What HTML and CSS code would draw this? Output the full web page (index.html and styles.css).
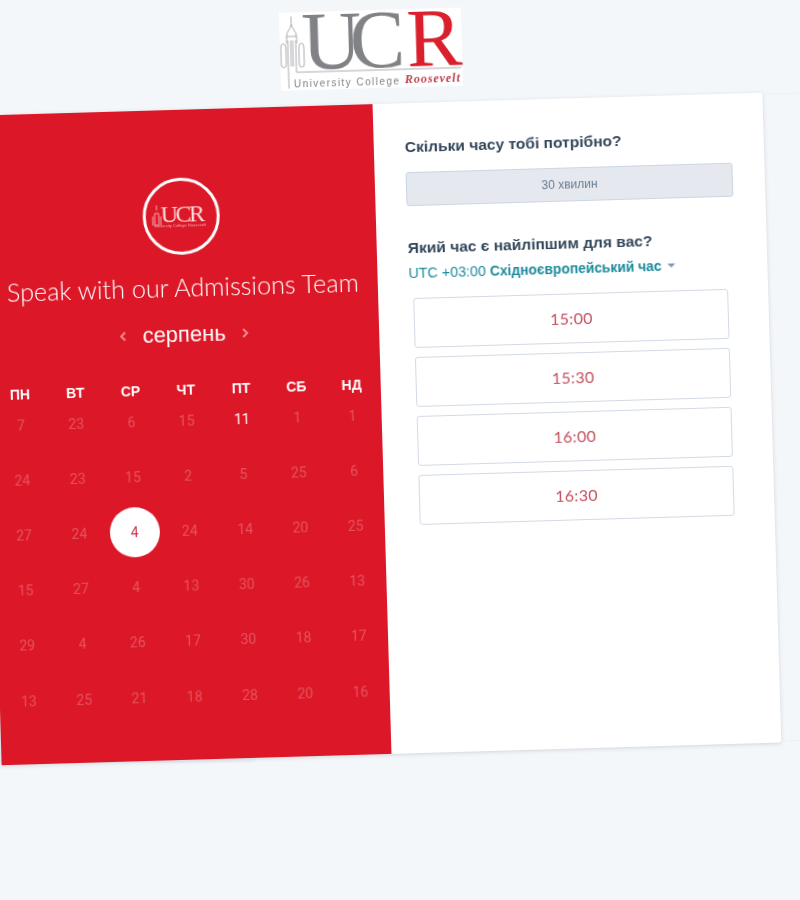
FILE: index.html
```html
<!doctype html>
<html>
<head>
	<title>Speak with our Admissions Team</title>
	<meta charset="utf-8">
	<link rel="stylesheet" href="styles.css">
</head>
<body>
	<div class="page">
		<div class="logo">
			<svg class="logoArt" width="182" height="78" viewBox="0 0 182 78">
				<path class="tower" d="M12 4V12M12 12C11 17 7 19 7 24M12 12C13 17 17 19 17 24M7 24H17M7 24V31M17 24V31M1 35Q1 31 3.5 31Q6 31 6 35V52Q6 55 3.5 55Q1 55 1 52ZM19 35Q19 31 21.5 31Q24 31 24 35V52Q24 55 21.5 55Q19 55 19 52ZM8 28V54M11 28V54M13 28V54M16 28V54M8 54V76M16 54V60H181"/>
				<text class="logoU" x="22" y="57">UC</text>
				<text class="logoR" x="127" y="57">R</text>
				<text class="logoLine" x="13" y="75" textLength="105">University College</text>
				<text class="logoScript" x="124" y="74" textLength="55">Roosevelt</text>
			</svg>
		</div>

		<div class="card">
			<div class="side">
				<div class="ring">
					<svg class="ringArt" width="62" height="26" viewBox="0 0 62 26">
						<path class="ringTower" d="M7 1V6M5 21V9H9V21ZM3 21V12M11 21V12"/>
						<text class="ringUcr" x="11" y="18">UCR</text>
						<text class="ringSub" x="4" y="23" textLength="52">University College Roosevelt</text>
					</svg>
				</div>
				<h2>Speak with our Admissions Team</h2>
				<div class="month">
					<svg class="arrow" width="8" height="12" viewBox="0 0 8 12"><path d="M6 2L2 6L6 10"/></svg>
					<span>серпень</span>
					<svg class="arrow" width="8" height="12" viewBox="0 0 8 12"><path d="M2 2L6 6L2 10"/></svg>
				</div>
				<div class="days">
					<b>ПН</b><b>ВТ</b><b>СР</b><b>ЧТ</b><b>ПТ</b><b>СБ</b><b>НД</b>
				</div>
				<div class="dates">
					<i>7</i><i>23</i><i>6</i><i>15</i><i class="on">11</i><i>1</i><i>1</i>
					<i>24</i><i>23</i><i>15</i><i>2</i><i>5</i><i>25</i><i>6</i>
					<i>27</i><i>24</i><i class="picked"><span>4</span></i><i>24</i><i>14</i><i>20</i><i>25</i>
					<i>15</i><i>27</i><i>4</i><i>13</i><i>30</i><i>26</i><i>13</i>
					<i>29</i><i>4</i><i>26</i><i>17</i><i>30</i><i>18</i><i>17</i>
					<i>13</i><i>25</i><i>21</i><i>18</i><i>28</i><i>20</i><i>16</i>
				</div>
			</div>

			<div class="main">
				<h3>Скільки часу тобі потрібно?</h3>
				<div class="duration">30 хвилин</div>
				<h3 class="second">Який час є найліпшим для вас?</h3>
				<div class="zone">UTC +03:00 <b>Східноєвропейський час</b><span class="caret"></span></div>
				<div class="slots">
					<a href="#">15:00</a>
					<a href="#">15:30</a>
					<a href="#">16:00</a>
					<a href="#">16:30</a>
				</div>
			</div>
		</div>
	</div>
</body>
</html>
```

FILE: styles.css
```css
html, body { margin: 0; padding: 0; height: 100% }
body {
	background-color: #f4f7fa;
	overflow: hidden;
	font-family: "Liberation Sans", Arial, sans-serif;
}

/* the whole page is photographed slightly turned */
.page {
	width: 780px;
	margin: 10px 0 0 -8px;
	transform: rotate(-1.67deg);
	transform-origin: 390px 419px;
	filter: blur(.3px);
}

.logo {
	display: flex;
	justify-content: center;
	margin-bottom: 16px;
}
.logoArt { background-color: #fff; filter: blur(.4px); display: block; overflow: visible }
.tower { fill: none; stroke: #9a9a9e; stroke-width: .8 }
.logoU { font-family: "Liberation Serif", serif; font-size: 83px; fill: #808285; letter-spacing: -12px }
.logoR { font-family: "Liberation Serif", serif; font-size: 83px; fill: #d9202c }
.logoLine { font-family: "Liberation Sans", sans-serif; font-size: 10px; fill: #808285 }
.logoScript { font-family: "Liberation Serif", serif; font-style: italic; font-weight: bold; font-size: 12px; fill: #b9404a }

.card {
	position: relative;
	display: flex;
	height: 650px;
	background-color: #fff;
	border-radius: 3px;
	box-shadow: 0 1px 4px rgba(60, 70, 90, .2);
}
/* faint edge of the section behind the card */
.card:after {
	content: "";
	position: absolute;
	left: 100%;
	top: 1px;
	bottom: 1px;
	width: 60px;
	border-top: 1px solid #edf0f4;
	border-bottom: 1px solid #edf0f4;
}

.side {
	width: 390px;
	flex: none;
	background-color: #dc1727;
	color: #fff;
	text-align: center;
	padding-top: 68px;
	box-sizing: border-box;
}
.ring {
	width: 71px;
	height: 71px;
	margin: 0 auto;
	border: 3px solid #fff;
	border-radius: 50%;
	display: flex;
	align-items: center;
	justify-content: center;
}
.ringArt { overflow: visible }
.ringTower { fill: none; stroke: #f5a8ae; stroke-width: 1 }
.ringUcr { font-family: "Liberation Serif", serif; font-size: 24px; fill: #fbdcdf; letter-spacing: -2.5px }
.ringSub { font-family: "Liberation Sans", sans-serif; font-size: 4px; fill: #f5a8ae }

h2 {
	margin: 14px 0 0;
	font-family: Lato, sans-serif;
	font-weight: 300;
	font-size: 25.2px;
	line-height: 36px;
}
.month {
	display: flex;
	align-items: center;
	justify-content: center;
	gap: 15px;
	margin-top: 15px;
	font-size: 22px;
	line-height: 30px;
}
.arrow { fill: none; stroke: #f08a92; stroke-width: 2 }

.days, .dates {
	display: grid;
	grid-template-columns: repeat(7, 55.3px);
	justify-content: center;
}
.days {
	margin-top: 32px;
	font-size: 14px;
	line-height: 16px;
}
.dates {
	grid-auto-rows: 55.2px;
	margin-top: -5px;
	font-family: Roboto, sans-serif;
	font-size: 14px;
}
.dates i {
	font-style: normal;
	color: rgba(255, 255, 255, .25);
	display: flex;
	align-items: center;
	justify-content: center;
}
.dates .on { color: #fff }
.dates .picked span {
	width: 50px;
	height: 50px;
	border-radius: 50%;
	background-color: #fff;
	color: #c8354a;
	display: flex;
	align-items: center;
	justify-content: center;
}

.main { flex: 1; padding: 34px 32px 0 31px }
h3 {
	margin: 0;
	font-size: 15.55px;
	line-height: 20px;
	color: #33475b;
}
.duration {
	margin-top: 15px;
	height: 32px;
	background-color: #e5e8ef;
	border: 1px solid #cbd6e2;
	border-radius: 3px;
	font-size: 12px;
	line-height: 32px;
	text-align: center;
	color: #6b7c8f;
}
.second { margin-top: 32px }
.zone {
	margin-top: 5px;
	font-size: 14.3px;
	line-height: 20px;
	color: #1b8a9c;
}
.zone b { font-size: 13.8px }
.caret {
	display: inline-block;
	margin-left: 6px;
	vertical-align: 3px;
	border: 4px solid transparent;
	border-top: 4px solid #7c98b6;
	border-bottom: 0;
}
.slots {
	display: flex;
	flex-direction: column;
	gap: 9px;
	margin: 14px 0 0 4px;
	padding-right: 8px;
}
.slots a {
	box-sizing: border-box;
	height: 50px;
	border: 1px solid #d3dae4;
	border-radius: 3px;
	font-family: Lato, sans-serif;
	font-size: 16px;
	letter-spacing: .3px;
	line-height: 48px;
	text-align: center;
	color: #c4505f;
	text-decoration: none;
}
```
